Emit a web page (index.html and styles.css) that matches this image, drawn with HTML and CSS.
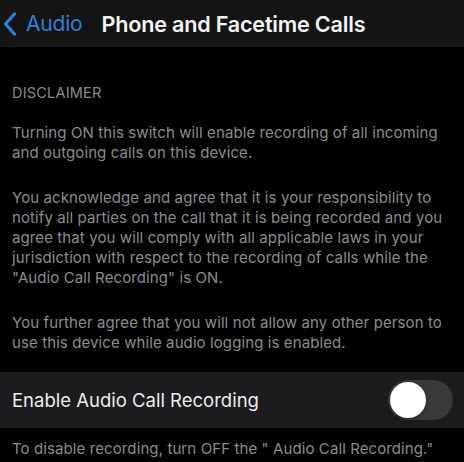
FILE: index.html
```html
<!DOCTYPE html>
<html lang="en">
<head>
<meta charset="utf-8">
<title>Phone and Facetime Calls</title>
<link rel="stylesheet" href="styles.css">
</head>
<body>
  <header class="navbar">
    <a class="back" href="#">
      <svg class="chevron" width="14" height="24" viewBox="0 0 14 24" aria-hidden="true">
        <path d="M11.5 2 L2.5 12 L11.5 22" fill="none" stroke="currentColor" stroke-width="3.2" stroke-linecap="round" stroke-linejoin="round"/>
      </svg>
      <span>Audio</span>
    </a>
    <h1 class="title">Phone and Facetime Calls</h1>
  </header>

  <main class="content">
    <section class="disclaimer">
      <h2 class="section-head">DISCLAIMER</h2>
      <p>Turning ON this switch will enable recording of all incoming and outgoing calls on this device.</p>
      <p>You acknowledge and agree that it is your responsibility to notify all parties on the call that it is being recorded and you agree that you will comply with all applicable laws in your jurisdiction with respect to the recording of calls while the "Audio Call Recording" is ON.</p>
      <p>You further agree that you will not allow any other person to use this device while audio logging is enabled.</p>
    </section>

    <div class="row">
      <span class="row-label">Enable Audio Call Recording</span>
      <span class="switch" role="switch" aria-checked="false"><span class="knob"></span></span>
    </div>

    <p class="footnote">To disable recording, turn OFF the " Audio Call Recording."</p>
  </main>
</body>
</html>
```

FILE: styles.css
```css
* {
  box-sizing: border-box;
}

body {
  margin: 0;
  background: #000;
  font-family: Inter, "Noto Sans", "Liberation Sans", sans-serif;
  color: #8b8b8f;
}

.navbar {
  height: 47px;
  background: #141414;
  display: flex;
  align-items: center;
  padding-left: 3px;
}

.back {
  display: flex;
  align-items: center;
  color: #2c7fdb;
  text-decoration: none;
  font-size: 21px;
  letter-spacing: -0.2px;
}

.chevron {
  margin-right: 9px;
}

.title {
  margin: 0 0 0 19px;
  font-size: 21.6px;
  font-weight: 600;
  color: #f4f4f4;
  letter-spacing: -0.2px;
}

.content {
  padding-top: 36px;
}

.disclaimer {
  padding: 0 12px;
}

.section-head {
  margin: 0 0 20px;
  font-size: 14.5px;
  font-weight: 400;
  line-height: 20px;
  letter-spacing: 0.2px;
}

.disclaimer p {
  margin: 0 0 25px;
  font-size: 15px;
  line-height: 20px;
  letter-spacing: 0.1px;
}

.disclaimer p:last-child {
  margin-bottom: 0;
}

.row {
  margin-top: 19px;
  height: 56px;
  background: #1c1c1e;
  display: flex;
  align-items: center;
  justify-content: space-between;
  padding: 0 11px 0 12px;
}

.row-label {
  font-size: 18.5px;
  color: #ececec;
}

.switch {
  width: 65px;
  height: 40px;
  border-radius: 20px;
  background: #39393b;
  padding: 2px;
  display: flex;
}

.knob {
  width: 36px;
  height: 36px;
  border-radius: 50%;
  background: #fff;
  box-shadow: 0 2px 4px rgba(0, 0, 0, 0.3);
}

.footnote {
  margin: 11px 12px 0;
  font-size: 15px;
  line-height: 20px;
  letter-spacing: 0.1px;
}
```
